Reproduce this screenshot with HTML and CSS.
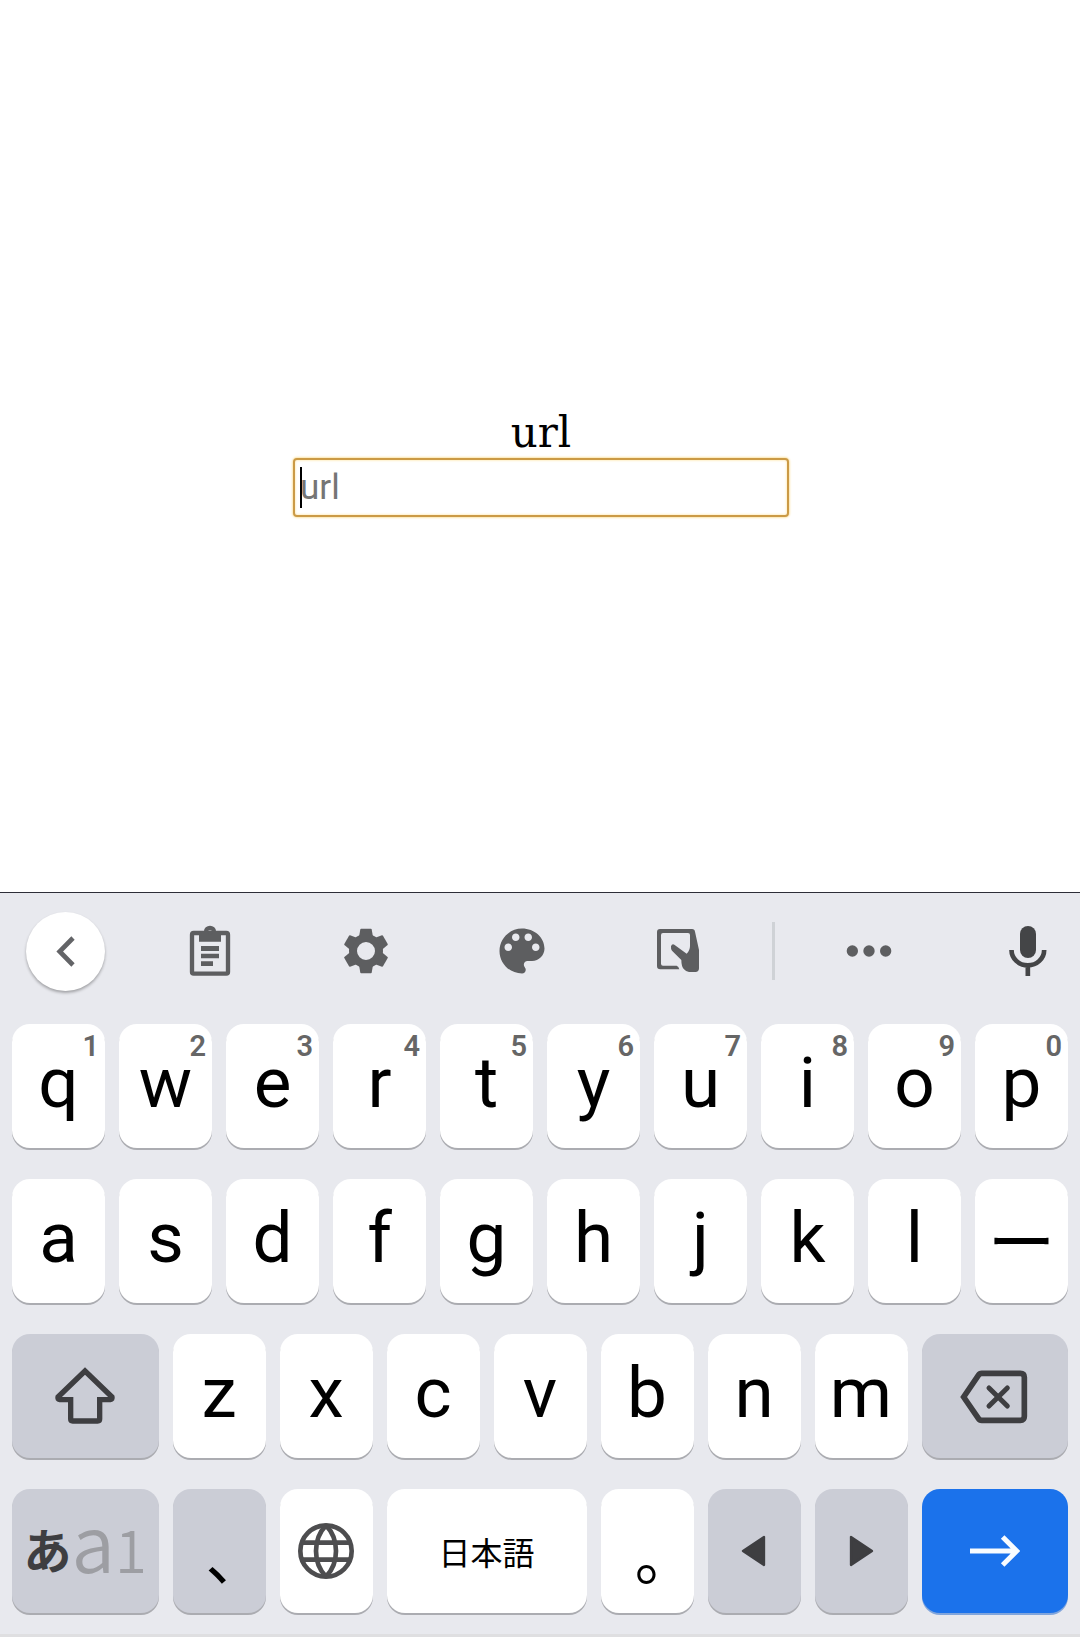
FILE: index.html
```html
<!DOCTYPE html>
<html lang="ja">
<head>
<meta charset="utf-8">
<meta name="viewport" content="width=device-width">
<title>url</title>
<link rel="stylesheet" href="styles.css">
</head>
<body>
<main class="page">
  <form class="field">
    <label class="field-label" for="url">url</label>
    <div class="field-box"><input class="field-input" id="url" type="url" placeholder="url"></div>
  </form>
</main>
<section class="keyboard" aria-label="Keyboard">
  <div class="toolbar">
    <button class="tool tool-back" type="button" aria-label="Back">
      <svg width="19" height="31" viewBox="0 0 57 93"><path d="M51 6 11 46.500 51 87" fill="none" stroke="#636467" stroke-width="14"/></svg>
    </button>
    <button class="tool" type="button" aria-label="Clipboard">
      <svg width="42" height="52" viewBox="567 135 126 156"><rect x="576" y="159" width="108" height="122" rx="5" fill="none" stroke="#5d5e60" stroke-width="13"/><path fill="#5d5e60" fill-rule="evenodd" d="M597 185V153H612a18 16 0 0 1 36 0H663V185ZM630 151a7 7 0 1 0 0 14 7 7 0 0 0 0-14ZM603 198h54v15h-54zM603 221h54v14h-54zM603 244h36v14h-36z"/></svg>
    </button>
    <button class="tool" type="button" aria-label="Settings">
      <svg width="46" height="46" viewBox="-69 -69 138 138" fill="#5d5e60"><circle r="39" fill="none" stroke="#5d5e60" stroke-width="24"/><g><path id="tooth" d="M-15-67H15L17-65 21-42H-21L-17-65Z"/><use href="#tooth" transform="rotate(60)"/><use href="#tooth" transform="rotate(120)"/><use href="#tooth" transform="rotate(180)"/><use href="#tooth" transform="rotate(240)"/><use href="#tooth" transform="rotate(300)"/></g></svg>
    </button>
    <button class="tool" type="button" aria-label="Theme">
      <svg width="60" height="60" viewBox="0 0 24 24"><path fill="#5d5e60" d="M12 3c-4.970 0-9 4.030-9 9s4.030 9 9 9c.830 0 1.500-.670 1.500-1.500 0-.390-.150-.740-.390-1.010-.230-.260-.380-.610-.380-.990 0-.830.670-1.500 1.500-1.500H16c2.760 0 5-2.240 5-5 0-4.420-4.030-8-9-8zm-5.500 9c-.830 0-1.500-.670-1.500-1.500S5.670 9 6.500 9 8 9.670 8 10.500 7.330 12 6.500 12zm3-4C8.670 8 8 7.330 8 6.500S8.670 5 9.500 5s1.500.670 1.500 1.500S10.330 8 9.500 8zm5 0c-.830 0-1.500-.670-1.500-1.500S13.670 5 14.500 5s1.500.670 1.500 1.500S15.330 8 14.500 8zm3 4c-.830 0-1.500-.670-1.500-1.500S16.670 9 17.500 9s1.500.670 1.500 1.500-.670 1.500-1.500 1.500z"/></svg>
    </button>
    <button class="tool" type="button" aria-label="One-handed mode">
      <svg width="44" height="46" viewBox="978 147 132 138" fill="#5d5e60"><path fill-rule="evenodd" d="M990 150H1086Q1094 150 1095 158L1107 213V268Q1107 279 1096 279H1077Q1069 279 1062 271 1054 263 1054 243L1026 215Q1022 210 1023 202 1026 193 1033 197L1070 224Q1080 214 1080 201V168Q1080 162 1074 162H999Q993 162 993 168V254Q993 260 999 260H1040Q1046 262 1048 271H991Q981 271 981 261V159Q981 150 990 150Z"/></svg>
    </button>
    <span class="toolbar-divider"></span>
    <button class="tool" type="button" aria-label="More">
      <svg width="46" height="12" viewBox="0 0 138 36" fill="#5d5e60"><circle cx="19" cy="18" r="17"/><circle cx="69" cy="18" r="17"/><circle cx="119" cy="18" r="17"/></svg>
    </button>
    <button class="tool tool-mic" type="button" aria-label="Voice input">
      <svg width="38" height="52" viewBox="1106 132 114 156"><rect x="1139" y="135" width="48" height="96" rx="24" fill="#444547"/><path d="M1113.500 207a49 46 0 0 0 98 0M1162.500 254V285" fill="none" stroke="#444547" stroke-width="14"/></svg>
    </button>
  </div>
  <div class="keys">
    <button class="key" type="button">q<small class="hint">1</small></button>
    <button class="key" type="button">w<small class="hint">2</small></button>
    <button class="key" type="button">e<small class="hint">3</small></button>
    <button class="key" type="button">r<small class="hint">4</small></button>
    <button class="key" type="button">t<small class="hint">5</small></button>
    <button class="key" type="button">y<small class="hint">6</small></button>
    <button class="key" type="button">u<small class="hint">7</small></button>
    <button class="key" type="button">i<small class="hint">8</small></button>
    <button class="key" type="button">o<small class="hint">9</small></button>
    <button class="key" type="button">p<small class="hint">0</small></button>

    <button class="key" type="button">a</button>
    <button class="key" type="button">s</button>
    <button class="key" type="button">d</button>
    <button class="key" type="button">f</button>
    <button class="key" type="button">g</button>
    <button class="key" type="button">h</button>
    <button class="key" type="button">j</button>
    <button class="key" type="button">k</button>
    <button class="key" type="button">l</button>
    <button class="key key-kana" type="button">ー</button>

    <button class="key key-wide key-gray key-icon" type="button" aria-label="Shift">
      <svg width="62" height="60" viewBox="162 138 186 180"><path d="M255 153 336 231Q338 238 331 239H299V297Q299 303 293 303H218Q212 303 212 297V239H179Q172 238 174 231Z" fill="none" stroke="#3e3e41" stroke-width="16"/></svg>
    </button>
    <button class="key" type="button">z</button>
    <button class="key" type="button">x</button>
    <button class="key" type="button">c</button>
    <button class="key" type="button">v</button>
    <button class="key" type="button">b</button>
    <button class="key" type="button">n</button>
    <button class="key" type="button">m</button>
    <button class="key key-wide key-gray key-icon" type="button" aria-label="Backspace">
      <svg width="70" height="58" viewBox="808 146 210 174" fill="none" stroke="#3e3e41" stroke-width="17"><path d="M873 165H989Q1001 165 1001 177V294Q1001 306 989 306H873Q867 306 863 300L819 236 863 171Q867 165 873 165Z"/><path d="M895 209 950 263M950 209 895 263" stroke-linecap="round" stroke-width="15"/></svg>
    </button>

    <button class="key key-wide key-gray key-mode" type="button"><b class="mode-kana">あ</b><span class="mode-latin">a</span><span class="mode-digit">1</span></button>
    <button class="key key-gray key-punct" type="button">、</button>
    <button class="key key-icon" type="button" aria-label="Language">
      <svg width="56" height="56" viewBox="-84 -84 168 168" fill="none" stroke="#4d4d4f" stroke-width="14"><circle r="77"/><path d="M-74-25H74M-74 26H74M0-77C-40-36-40 36 0 77M0-77C40-36 40 36 0 77"/></svg>
    </button>
    <button class="key key-space" type="button">日本語</button>
    <button class="key key-punct" type="button">。</button>
    <button class="key key-gray key-icon" type="button" aria-label="Left">
      <svg width="26" height="32" viewBox="0 0 78 96"><path d="M6 48 69 6V90Z" fill="#3e3e41" stroke="#3e3e41" stroke-width="7" stroke-linejoin="round"/></svg>
    </button>
    <button class="key key-gray key-icon" type="button" aria-label="Right">
      <svg width="26" height="32" viewBox="0 0 78 96"><path d="M72 48 9 6V90Z" fill="#3e3e41" stroke="#3e3e41" stroke-width="7" stroke-linejoin="round"/></svg>
    </button>
    <button class="key key-wide key-enter key-icon" type="button" aria-label="Go">
      <svg width="50" height="34" viewBox="0 0 150 102" fill="none" stroke="#f8fcff" stroke-width="15"><path d="M0 51H138M98 9 140 51 98 93"/></svg>
    </button>
  </div>
</section>
</body>
</html>
```
FILE: styles.css
```css
* {
  box-sizing: border-box;
}

body {
  display: flex;
  flex-direction: column;
  min-height: 100vh;
  margin: 0;
  background: #fff;
}

button {
  margin: 0;
  border: 0;
  background: none;
}

svg {
  display: block;
}

.page {
  flex: 1;
  padding: 408px 18px 40px 20px;
}

.field {
  display: flex;
  flex-direction: column;
  align-items: center;
}

.field-label {
  color: #000;
  font: 42px/50px "DejaVu Serif", serif;
}

.field-box {
  position: relative;
  width: 496px;
  max-width: 100%;
}

/* text caret */
.field-box::before {
  content: "";
  position: absolute;
  top: 9px;
  left: 7px;
  width: 2px;
  height: 41px;
  background: #000;
}

.field-input {
  display: block;
  width: 100%;
  height: 59px;
  padding: 0 5px;
  border: 2px solid #cb9a45;
  border-radius: 4px;
  outline: 0;
  background: #fff;
  box-shadow: 0 0 2px 1px #fbe5ad, inset 0 0 2px 1px #fff0c9;
  font: 35px/40px Roboto, sans-serif;
}

.field-input::placeholder {
  color: #757575;
  opacity: 1;
}

.keyboard {
  border-top: 1px solid #2d2e38;
  background: #e8e9ee;
  border-bottom: 3px solid #fff;
  box-shadow: inset 0 -3px #dfdfe1;
}

.toolbar {
  display: grid;
  grid-template-columns: 132fr repeat(4, 156fr) 35fr 156fr 133fr;
  align-items: center;
  height: 131px;
  padding-bottom: 15px;
}

.tool {
  display: flex;
  align-items: center;
  justify-content: center;
  padding: 0;
}

.tool-back {
  width: 79px;
  height: 79px;
  margin-left: 26px;
  border-radius: 50%;
  background: #fff;
  box-shadow: 0 2px 3px rgba(0, 0, 0, 0.3);
}

.tool-mic {
  justify-content: flex-end;
  padding-right: 33px;
}

.toolbar-divider {
  justify-self: center;
  width: 3px;
  height: 58px;
  background: #cfd2d6;
}

.keys {
  display: grid;
  grid-template-columns: repeat(20, 1fr);
  gap: 31px 14px;
  padding: 0 12px 24px;
}

.key {
  position: relative;
  display: flex;
  grid-column: span 2;
  align-items: center;
  justify-content: center;
  height: 124px;
  padding: 0 0 6px;
  border-radius: 18px;
  background: #fff;
  box-shadow: 0 2px #abacb1;
  color: #000;
  font: 71px/80px Roboto, sans-serif;
}

.hint {
  position: absolute;
  top: 6px;
  right: 6px;
  color: #666;
  font: 600 29px/32px Roboto, sans-serif;
}

.key-wide {
  grid-column: span 3;
}

.key-gray {
  background: #cbcdd6;
}

.key-icon {
  padding: 0;
}

.key-kana,
.key-punct,
.key-mode,
.key-space {
  font-family: "Noto Sans CJK JP", sans-serif;
}

.key-kana {
  font-size: 68px;
}

.key-punct {
  padding: 6px 0 0 4px;
  font-size: 60px;
  font-feature-settings: "palt";
}

.key-mode {
  align-items: baseline;
  padding-top: 10px;
}

.mode-kana {
  align-self: center;
  padding-bottom: 10px;
  color: #3e3e41;
  font-size: 48px;
}

.mode-latin {
  color: #9d9ea3;
  font-size: 78px;
  font-weight: 350;
}

.mode-digit {
  color: #9d9ea3;
  font-size: 58px;
  font-weight: 350;
}

.key-space {
  grid-column: span 4;
  padding: 0;
  font-size: 32px;
}

.key-enter {
  background: #1b72eb;
  box-shadow: 0 2px #80a5dc;
}
```
